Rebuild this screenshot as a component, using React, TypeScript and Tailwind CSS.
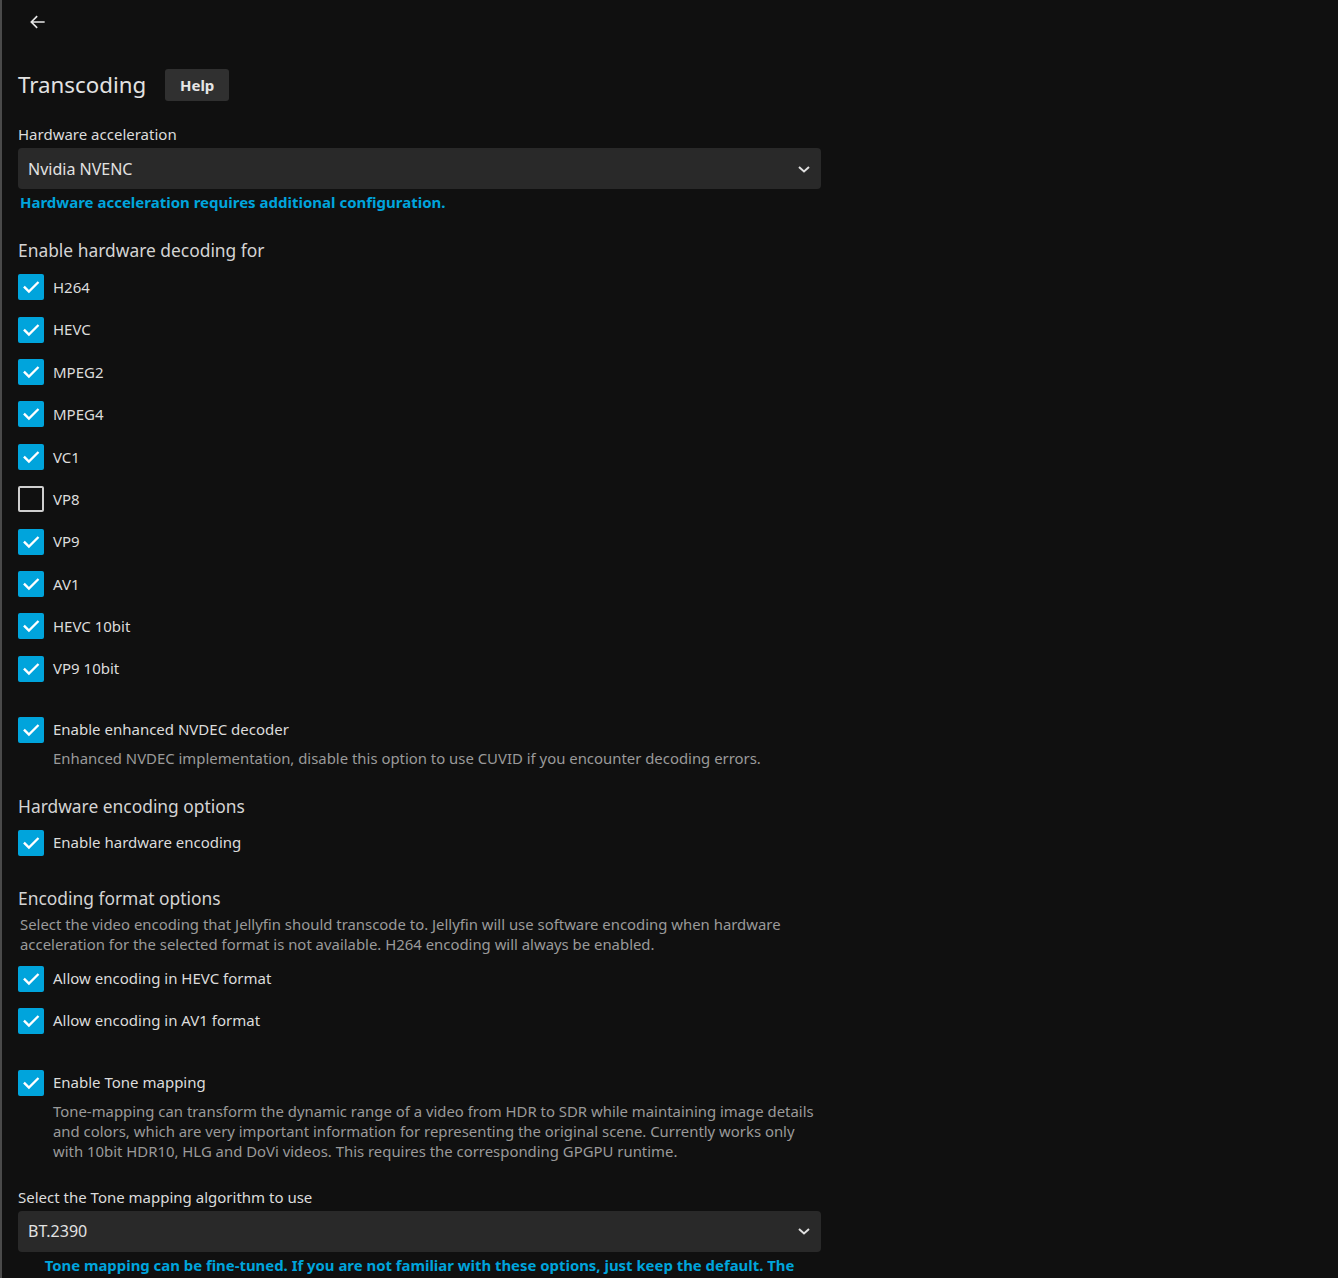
import React from "react";

const Check = ({ checked = true }: { checked?: boolean }) =>
  checked ? (
    <div className="w-[26px] h-[26px] rounded-[2px] bg-[#00a4dc] flex items-center justify-center shrink-0">
      <svg width="20" height="20" viewBox="0 0 24 24" fill="none">
        <path d="M4.5 12.5l5 5L20 7" stroke="#fff" strokeWidth="2.8" strokeLinecap="square" strokeLinejoin="miter" />
      </svg>
    </div>
  ) : (
    <div className="w-[26px] h-[26px] rounded-[2px] border-2 border-[#cfcfcf] shrink-0" />
  );

const Row = ({ label, checked = true }: { label: string; checked?: boolean }) => (
  <div className="h-[42.4px] flex items-center">
    <Check checked={checked} />
    <span className="ml-[9px] text-[15px] text-[#dcdcdc]">{label}</span>
  </div>
);

const Single = ({ label, className = "" }: { label: string; className?: string }) => (
  <div className={"h-[26px] flex items-center " + className}>
    <Check />
    <span className="ml-[9px] text-[15px] text-[#dcdcdc]">{label}</span>
  </div>
);

const Chevron = () => (
  <svg width="14" height="10" viewBox="0 0 14 10" fill="none" className="absolute right-[10px] top-1/2 -translate-y-1/2">
    <path d="M2 3l5 4.5L12 3" stroke="#e0e0e0" strokeWidth="2" />
  </svg>
);

const Select = ({ value, className = "" }: { value: string; className?: string }) => (
  <div className={"relative h-[41px] w-[803px] rounded-[4px] bg-[#292929] flex items-center pl-[10px] " + className}>
    <span className="text-[16px] text-[#e2e2e2]">{value}</span>
    <Chevron />
  </div>
);

export default function App() {
  const codecs: [string, boolean][] = [
    ["H264", true],
    ["HEVC", true],
    ["MPEG2", true],
    ["MPEG4", true],
    ["VC1", true],
    ["VP8", false],
    ["VP9", true],
    ["AV1", true],
    ["HEVC 10bit", true],
    ["VP9 10bit", true],
  ];
  return (
    <div
      className="min-h-[1278px] bg-[#101010] border-l-2 border-[#4a4a4a] text-[#dcdcdc]"
      style={{ fontFamily: '"Noto Sans", "Open Sans", sans-serif' }}
    >
      <div className="h-[44px] flex items-center pl-[26px]">
        <svg width="20" height="20" viewBox="0 0 24 24" fill="none">
          <path d="M20 12H5M11 5l-7 7 7 7" stroke="#e6e6e6" strokeWidth="2" />
        </svg>
      </div>
      <div className="pl-[16px] w-[819px]">
        <div className="mt-[25px] h-[32px] flex items-center">
          <h2 className="text-[22.3px] text-[#e2e2e2] leading-none">Transcoding</h2>
          <button className="ml-[19px] h-[32px] w-[64px] rounded-[3px] bg-[#303030] text-[15px] font-bold text-[#e6e6e6]">
            Help
          </button>
        </div>
        <div className="mt-[23px] h-[20px] leading-[20px] text-[15px]">Hardware acceleration</div>
        <Select value="Nvidia NVENC" className="mt-[4px]" />
        <div className="mt-[3px] h-[20px] leading-[20px] pl-[2px] text-[15px] font-bold text-[#00a4dc]">
          Hardware acceleration requires additional configuration.
        </div>
        <h3 className="mt-[25px] h-[26px] leading-[26px] text-[17.4px] text-[#d4d4d4]">Enable hardware decoding for</h3>
        <div className="mt-[3px]">
          {codecs.map(([c, v]) => (
            <Row key={c} label={c} checked={v} />
          ))}
        </div>
        <Single label="Enable enhanced NVDEC decoder" className="mt-[26.6px]" />
        <div className="mt-[5px] h-[20px] leading-[20px] pl-[35px] text-[14.9px] text-[#9a9a9a]">
          Enhanced NVDEC implementation, disable this option to use CUVID if you encounter decoding errors.
        </div>
        <h3 className="mt-[25px] h-[26px] leading-[26px] text-[17.4px] text-[#d4d4d4]">Hardware encoding options</h3>
        <Single label="Enable hardware encoding" className="mt-[11px]" />
        <h3 className="mt-[29px] h-[26px] leading-[26px] text-[17.4px] text-[#d4d4d4]">Encoding format options</h3>
        <div className="mt-[3px] leading-[20px] pl-[2px] text-[14.9px] text-[#9a9a9a]">
          Select the video encoding that Jellyfin should transcode to. Jellyfin will use software encoding when hardware
          acceleration for the selected format is not available. H264 encoding will always be enabled.
        </div>
        <Single label="Allow encoding in HEVC format" className="mt-[12px]" />
        <Single label="Allow encoding in AV1 format" className="mt-[16px]" />
        <Single label="Enable Tone mapping" className="mt-[36px]" />
        <div className="mt-[5px] leading-[20px] pl-[35px] text-[14.9px] text-[#9a9a9a]">
          Tone-mapping can transform the dynamic range of a video from HDR to SDR while maintaining image details and
          colors, which are very important information for representing the original scene. Currently works only with
          10bit HDR10, HLG and DoVi videos. This requires the corresponding GPGPU runtime.
        </div>
        <div className="mt-[26px] h-[20px] leading-[20px] text-[15px]">Select the Tone mapping algorithm to use</div>
        <Select value="BT.2390" className="mt-[4px]" />
        <div className="mt-[3px] leading-[20px] text-center text-[14.9px] font-bold text-[#00a4dc]">
          Tone mapping can be fine-tuned. If you are not familiar with these options, just keep the default. The
          default values are recommended for most users and should work well with most content.
        </div>
      </div>
    </div>
  );
}
